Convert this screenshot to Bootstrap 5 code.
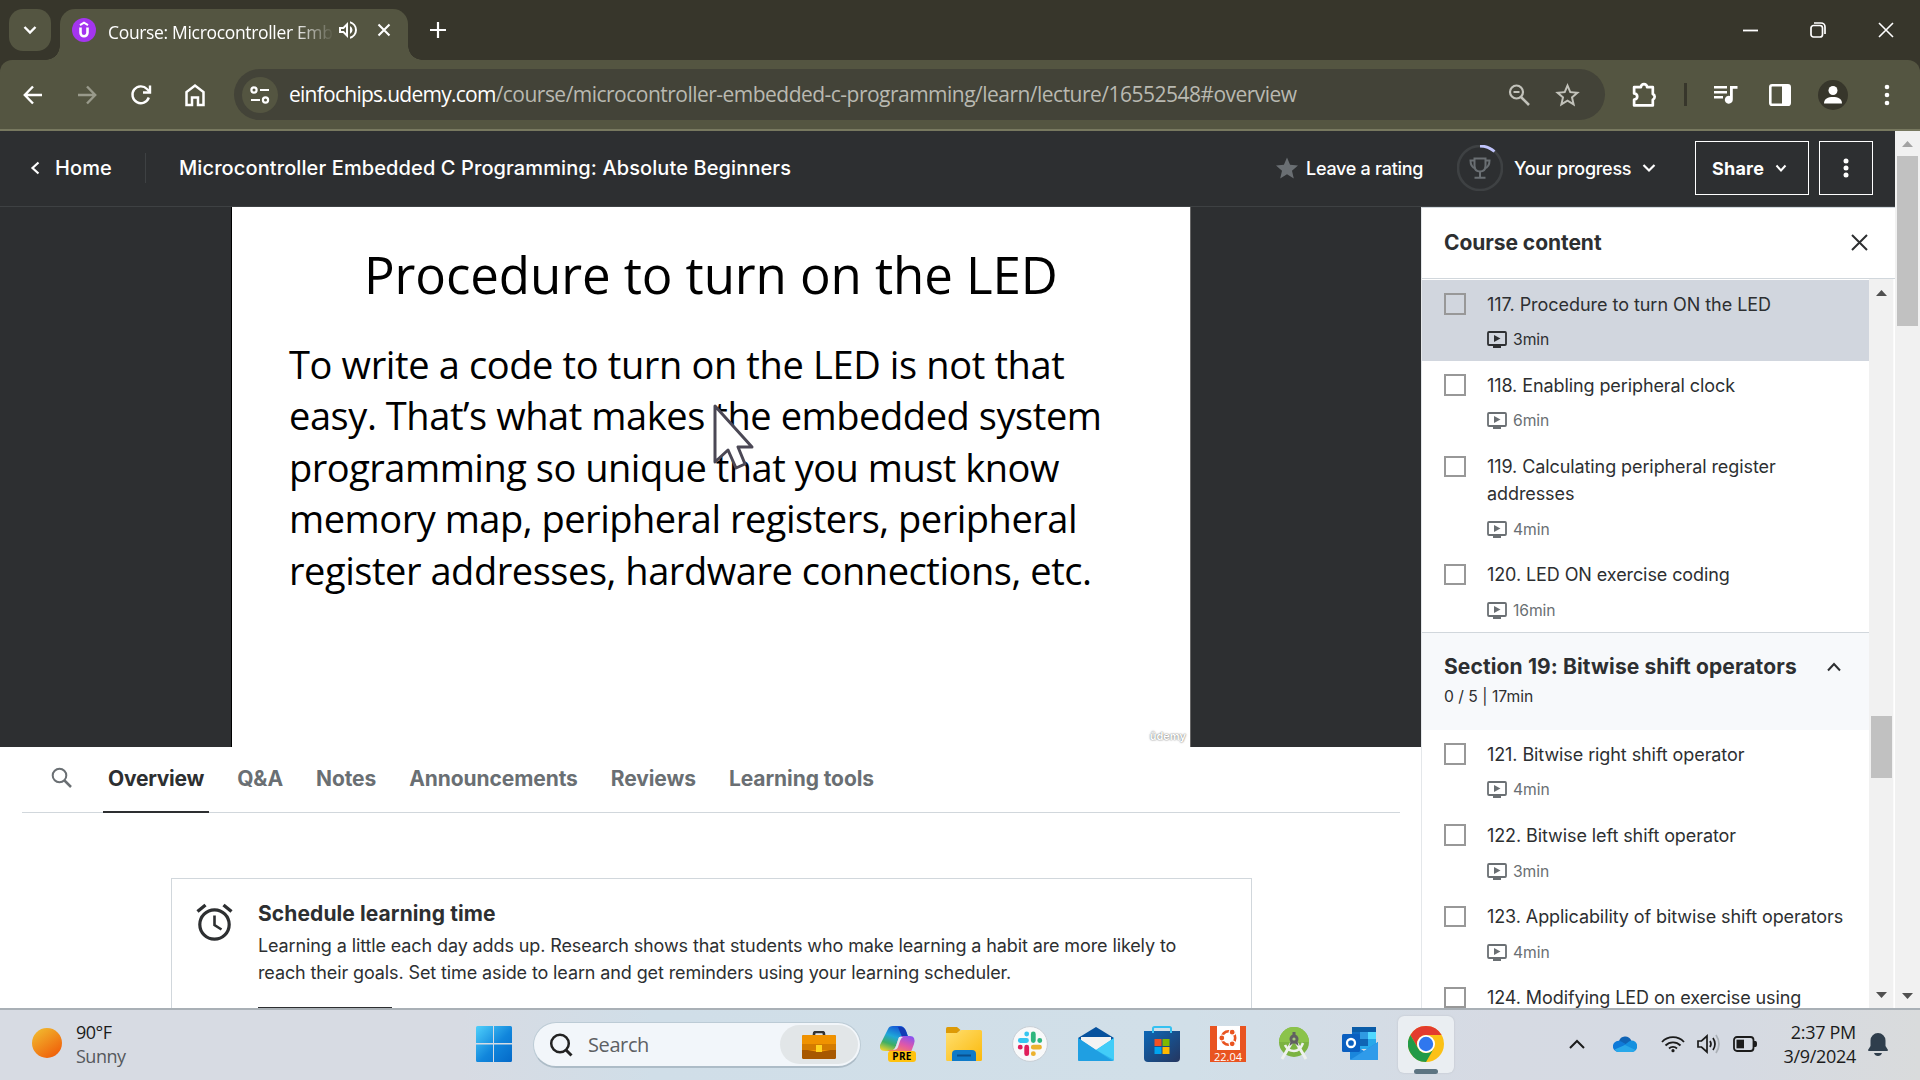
<!DOCTYPE html>
<html lang="en">
<head>
<meta charset="utf-8">
<title>Course: Microcontroller Embedded C Programming</title>
<link href="https://cdn.jsdelivr.net/npm/bootstrap@5.3.0/dist/css/bootstrap.min.css" rel="stylesheet">
<script src="https://cdn.jsdelivr.net/npm/bootstrap@5.3.0/dist/js/bootstrap.bundle.min.js"></script>
<style>
body{width:1920px;height:1080px;overflow:hidden;font-family:Inter,"Liberation Sans",sans-serif;color:#2d2f31;background:#fff;font-size:18px}
svg{display:block;flex:none}
.sys{font-family:"Open Sans","Noto Sans",sans-serif}
.slot{display:flex;align-items:center;justify-content:center;flex:none}
.w32{width:32px}.w54{width:54px}.w68{width:68px}.w78{width:78px}
/* browser chrome */
.tabstrip{height:60px;background:#37362b;padding:9px 0 0 9px;color:#fff}
.tabsearch{width:42px;height:42px;border-radius:14px;background:#545541;margin-right:9px}
.browser-tab{width:348px;height:51px;border-radius:15px 15px 0 0;background:#545541;position:relative;padding:0 12px 9px}
.browser-tab:before,.browser-tab:after{content:"";position:absolute;bottom:0;width:14px;height:14px}
.browser-tab:before{left:-14px;background:radial-gradient(circle at 0 0,transparent 13.5px,#545541 14px)}
.browser-tab:after{right:-14px;background:radial-gradient(circle at 100% 0,transparent 13.5px,#545541 14px)}
.tab-title{width:228px;margin-left:12px;font-size:17.5px;letter-spacing:-.33px;white-space:nowrap;-webkit-mask-image:linear-gradient(90deg,#000 185px,transparent 226px);mask-image:linear-gradient(90deg,#000 185px,transparent 226px);padding-top:4px}
.newtab{width:60px;height:42px}
.corner{background:#37362b}
.toolbar{height:71px;background:#545541;border-bottom:2px solid #77785f;border-radius:12px 12px 0 0;color:#fff}
.addr{width:1371px;height:51px;border-radius:26px;background:#434338;margin-left:12px;padding-left:8px}
.addr-icons{width:92px;gap:25px;margin-left:25px}
.siteinfo{width:36px;height:36px;border-radius:50%;background:#545541}
.url{font-size:21px;letter-spacing:-.52px;color:#b9b9b1;margin-left:11px;width:1184px;white-space:nowrap}
.url b{font-weight:400;color:#fff;letter-spacing:-.74px}
.tsep{width:3px;height:23px;background:#37362b}
.profile{width:30px;height:30px;border-radius:50%;background:#37362b}
/* course header */
.course-head{width:1895px;height:76px;background:#2d2f31;border-bottom:1px solid #3e4143;color:#fff;padding-bottom:1px}
.course-name{font-size:20px;font-weight:500;letter-spacing:.105px;white-space:nowrap;width:1097px}
.home-link{width:90px;margin-left:15px}
.hsep{width:1px;height:30px;background:#3e4143;margin-right:33px}
.hd{font-size:18px;white-space:nowrap;font-weight:500;letter-spacing:-.27px}
.obtn{border:1px solid #fff;height:54px}
/* page scrollbar */
.page-scroll{width:25px;height:877px;background:#f1f1f1;padding:9px 2px 0}
.page-thumb{height:170px;background:#c1c1c1;margin-top:9px}
.page-row{height:877px}
/* video */
.main-col{width:1421px;height:801px;overflow:hidden}
.video{height:540px;background:#2d2f31}
.slide{width:960px;height:540px;margin-left:231px;background:#fff;position:relative;color:#000;font-family:"Open Sans",sans-serif;border-left:1px solid #000;border-right:1px solid #666;padding-top:37px}
.slide-title{font-size:51px;line-height:60px;letter-spacing:-.08px;padding-left:132px;white-space:nowrap}
.slide-body{font-size:38px;line-height:51.4px;margin-top:35px;padding-left:57px;white-space:nowrap}
.slide-body div:nth-child(1){letter-spacing:-.37px}
.slide-body div:nth-child(2){letter-spacing:-.43px}
.slide-body div:nth-child(3){letter-spacing:-.49px}
.slide-body div:nth-child(4){letter-spacing:-.48px}
.slide-body div:nth-child(5){letter-spacing:-.45px}
.pointer{position:absolute;left:480px;top:195px}
.wmark{position:absolute;right:4px;bottom:1px;font:600 11px Inter,sans-serif;color:#fff;text-shadow:0 0 2px #777,0 0 1px #999;line-height:20px}
/* lower tabs */
.ctabs{margin:0 21px 0 22px;height:66px;border-bottom:1.5px solid #d1d7dc;padding-left:25px}
.ctab-search{width:56px;padding:0 0 3px 4px}
.ctab{font-size:21px;font-weight:700;color:#6a6f73;padding:0 5px;height:66px;line-height:64px;letter-spacing:-.09px;white-space:nowrap}
.ctab.on{color:#2d2f31;border-bottom:2.5px solid #2d2f31;letter-spacing:-.25px}
.sched{width:1081px;height:200px;border:1px solid #d1d7dc;margin:65px 0 0 171px;padding:21px 0 0 24px}
.sched h2{font-size:21px;font-weight:700;line-height:28px;margin:0 0 4px;letter-spacing:.09px}
.sched-text{font-size:18px;line-height:27px;letter-spacing:-.115px;white-space:nowrap}
.sched-btn{width:134px;height:40px;border:1px solid #2d2f31;margin-top:21px}
/* sidebar */
.side{width:474px;height:801px;border-left:1px solid #e4e7ea;border-top:1px solid #d1d7dc;background:#fff;overflow:hidden}
.side-head{height:71px;border-bottom:1px solid #d1d7dc;padding:0 27px 1px 22px;font-size:21px;font-weight:700;letter-spacing:-.06px}
.lessons{width:447px;height:729px;overflow:hidden;padding-top:1px}
.lesson{padding:10.5px 0 9.400px 22px;letter-spacing:-.09px;line-height:27px;white-space:nowrap}
.lesson.now{background:#d1d6de;letter-spacing:-.04px}
.box22{width:21.5px;height:21.5px;border:2px solid #989898;margin:2.5px 21.5px 0 0;flex:none}
.meta{height:24.400px;margin-top:10px;font-size:15.7px;color:#6a6f73;gap:6px}
.now .meta{color:#2d2f31}
.sect{height:98px;border-top:1px solid #d1d7dc;padding:19px 25px 0 22px;background:#f7f9fb}
.sect h3{font-size:21px;font-weight:700;line-height:30px;margin:0;letter-spacing:.12px;white-space:nowrap}
.sect-sub{font-size:15.700px;line-height:30px}
.side-scroll{width:25px;background:#f1f1f1;border-right:1px solid #fafafa;height:729px;padding-top:10px}
.side-thumb{width:21px;height:62px;background:#c1c1c1;margin:420px 0 0 2px}
/* taskbar */
.taskbar{height:72px;border-top:2px solid #a9b0b6;background:linear-gradient(90deg,#d7dbe3 0,#d7dbe3 24%,#d0dee8 34%,#d1dfe8 62%,#d6dae3 78%,#d5dae3 90%,#d9dbdc 100%);color:#1b1b1b;font-size:18px}
.weather{width:400px;margin-top:-3px;letter-spacing:-.5px}
.tb-search{width:328px;height:46px;border-radius:23px;background:#f2f6fa;border:1px solid #bccbd5;border-bottom:2px solid #adbcc7;margin-left:21px;padding:0 2px 0 15px}
.tb-hint{font-size:20px;letter-spacing:-.4px;color:#5d6063;margin-left:15px}
.brief{width:78px;height:39px;border-radius:20px;background:#e2e6e8}
.apps{margin:-2px 0 0 4px}
.app{width:66px;height:70px}
.app-on{width:56px;height:57px;border-radius:6px;background:#eaeef2;box-shadow:0 0 2px #b9bec6;position:relative}
.app-on i{position:absolute;left:16px;bottom:-1px;width:24px;height:5px;border-radius:3px;background:#5d7482}
.lh24{line-height:24px}
.clock{width:74px;letter-spacing:-.3px;white-space:nowrap}
</style>
</head>
<body>
<svg width="0" height="0" class="position-absolute">
 <defs>
  <symbol id="vid" viewBox="0 0 20 17"><rect x="1" y="1" width="18" height="13" rx="1" fill="none" stroke="currentColor" stroke-width="1.8"/><path d="M7 4v7l6.500-3.500z" fill="currentColor"/><path d="M6 14.500h8V17H6z" fill="currentColor"/></symbol>
 </defs>
</svg>

<!-- tab strip -->
<div class="tabstrip d-flex sys">
  <div class="tabsearch slot"><svg width="14" height="10" viewBox="0 0 14 10" fill="none" stroke="#fff" stroke-width="2.400"><path d="M1.500 2 7 7.500 12.500 2"/></svg></div>
  <div class="browser-tab d-flex align-items-center">
    <svg width="24" height="24" viewBox="0 0 24 24"><circle cx="12" cy="12" r="12" fill="#a435f0"/><path d="M8 7.200 12 4.600 16 7.200" fill="none" stroke="#fff" stroke-width="2"/><path d="M8.500 9.500v5.300a3.500 3.500 0 0 0 7 0V9.500" fill="none" stroke="#fff" stroke-width="2.600"/></svg>
    <div class="tab-title">Course: Microcontroller Emb</div>
    <svg width="24" height="24" viewBox="0 0 24 24" fill="#fff"><path d="M3 9v6h4l5 5V4L7 9H3zm7-.17v6.340L7.830 13H5v-2h2.830L10 8.830zM16.500 12A4.500 4.500 0 0 0 14 7.970v8.050A4.470 4.470 0 0 0 16.500 12zM14 3.230v2.060a7 7 0 0 1 0 13.420v2.060a9 9 0 0 0 0-17.540z"/></svg>
    <svg class="ms-auto me-1" width="16" height="16" viewBox="0 0 16 16" stroke="#fff" stroke-width="2.100"><path d="M2.500 2.500l11 11M13.500 2.500l-11 11"/></svg>
  </div>
  <div class="slot newtab"><svg width="16" height="16" viewBox="0 0 16 16" stroke="#fff" stroke-width="2.200"><path d="M8 0v16M0 8h16"/></svg></div>
  <div class="d-flex ms-auto newtab w-auto">
    <div class="slot w68"><svg width="15" height="15" viewBox="0 0 15 15" stroke="#fff" stroke-width="1.800"><path d="M0 7.500h15"/></svg></div>
    <div class="slot w68"><svg width="16" height="16" viewBox="0 0 16 16" fill="none" stroke="#fff" stroke-width="1.700"><rect x="1" y="3.500" width="11.500" height="11.500" rx="2.500"/><path d="M4 1h7a4 4 0 0 1 4 4v7"/></svg></div>
    <div class="slot w68"><svg width="16" height="16" viewBox="0 0 16 16" stroke="#fff" stroke-width="1.600"><path d="M1 1l14 14M15 1L1 15"/></svg></div>
  </div>
</div>

<!-- toolbar -->
<div class="corner">
<div class="toolbar d-flex align-items-center sys">
  <div class="d-flex" style="margin-left:6px">
    <div class="slot w54"><svg width="20" height="20" viewBox="0 0 20 20" fill="none" stroke="#fff" stroke-width="2.400"><path d="M19 10H2.500M10 1.500 1.800 10l8.200 8.500"/></svg></div>
    <div class="slot w54"><svg width="20" height="20" viewBox="0 0 20 20" fill="none" stroke="#999a8b" stroke-width="2.400"><path d="M1 10h16.500M10 1.500l8.200 8.500-8.200 8.500"/></svg></div>
    <div class="slot w54"><svg width="22" height="22" viewBox="0 0 22 22" fill="none" stroke="#fff" stroke-width="2.400"><path d="M18.800 13.500A8.400 8.400 0 1 1 17 5l2.500 2.500"/><path d="M20 1.500v7h-7"/></svg></div>
    <div class="slot w54"><svg width="22" height="24" viewBox="0 0 22 24" fill="none" stroke="#fff" stroke-width="2.500"><path d="M2.500 22V9L11 2.500 19.500 9v13H14v-7.500H8V22z"/></svg></div>
  </div>
  <div class="addr d-flex align-items-center">
    <div class="siteinfo slot"><svg width="20" height="18" viewBox="0 0 20 18" fill="none" stroke="#fff" stroke-width="2.200"><circle cx="4" cy="4" r="2.600"/><path d="M10 4h9M1 14h9"/><circle cx="15.500" cy="14" r="2.600"/></svg></div>
    <div class="url"><b>einfochips.udemy.com</b>/course/microcontroller-embedded-c-programming/learn/lecture/16552548#overview</div>
    <div class="slot addr-icons">
      <svg width="22" height="22" viewBox="0 0 22 22" fill="none" stroke="#c2c2ba"><circle cx="8.500" cy="8" r="6.500" stroke-width="2.200"/><path d="M13 13l8 8" stroke-width="2.600"/><path d="M5.500 8h6" stroke-width="2"/></svg>
      <svg width="25" height="24" viewBox="2 2 20 19.500" fill="#c2c2ba"><path d="M22 9.240l-7.190-.62L12 2 9.190 8.630 2 9.240l5.460 4.730L5.820 21 12 17.270 18.180 21l-1.630-7.030L22 9.240zM12 15.400l-3.760 2.270 1-4.280-3.320-2.880 4.380-.38L12 6.100l1.710 4.040 4.380.38-3.320 2.880 1 4.280L12 15.400z"/></svg>
    </div>
  </div>
  <div class="slot" style="width:79px"><svg width="27" height="28" viewBox="0 1 26 26" fill="none" stroke="#fff" stroke-width="2.600" stroke-linejoin="round"><path d="M3 6.500h6.500a3 3 0 0 1 6 0H21v6.500a3 3 0 0 1 0 5.500V24H3v-5.500c4-.5 4-5.500 0-6z"/></svg></div>
  <div class="tsep"></div>
  <div class="slot w78"><svg width="24" height="20" viewBox="0 0 24 20" fill="#fff"><path d="M0 1h13v2.400H0zM0 6h13v2.400H0zM0 11h9v2.400H0zM16 1h7.500v2.800H18.800V14.500a4 4 0 1 1-2.800-3.600z"/></svg></div>
  <div class="slot" style="width:30px"><svg width="22" height="22" viewBox="0 0 22 22"><rect x="1.300" y="1.300" width="19.400" height="19.400" rx="1.800" fill="none" stroke="#fff" stroke-width="2.600"/><path d="M13 1h8v20h-8z" fill="#fff"/></svg></div>
  <div class="slot" style="width:76px"><div class="profile slot"><svg width="18" height="20" viewBox="0 0 18 20" fill="#fff"><circle cx="9" cy="5.500" r="4.500"/><path d="M0 18.500c0-5 4-6.500 9-6.500s9 1.500 9 6.500z"/></svg></div></div>
  <div class="slot w32"><svg width="6" height="22" viewBox="0 0 6 22" fill="#fff"><circle cx="3" cy="3" r="2.300"/><circle cx="3" cy="11" r="2.300"/><circle cx="3" cy="19" r="2.300"/></svg></div>
</div>
</div>

<div class="d-flex page-row">
<div>
  <!-- course header -->
  <header class="course-head d-flex align-items-center">
    <svg style="margin-left:30px" width="10" height="14" viewBox="0 0 10 14" fill="none" stroke="#fff" stroke-width="2.200"><path d="M8.500 1.500 2.500 7l6 5.500"/></svg>
    <div class="course-name home-link">Home</div>
    <div class="hsep"></div>
    <div class="course-name">Microcontroller Embedded C Programming: Absolute Beginners</div>
    <svg width="22" height="22" viewBox="2 2 20 19" fill="#6a6f73"><path d="M12 17.270 18.180 21l-1.640-7.030L22 9.240l-7.190-.61L12 2 9.190 8.630 2 9.240l5.460 4.730L5.820 21z"/></svg>
    <div class="hd" style="margin-left:8px;width:151px">Leave a rating</div>
    <svg width="46" height="46" viewBox="0 0 46 46" fill="none"><circle cx="23" cy="23" r="22" stroke="#3e4143" stroke-width="2.600"/><path d="M23 1a22 22 0 0 1 14.500 5.500" stroke="#c0c4fc" stroke-width="2.800"/><g stroke="#6a6f73" stroke-width="2"><path d="M17.500 13.500h11v7c0 4-2.500 6-5.500 6s-5.500-2-5.500-6z"/><path d="M17.500 15.500H13.500c0 5 1.500 7 5 8M28.500 15.500h4c0 5-1.500 7-5 8M23 26.500V32M17.500 32.800h11"/></g></svg>
    <div class="hd" style="margin-left:11px;width:128px">Your progress</div>
    <svg width="14" height="10" viewBox="0 0 14 10" fill="none" stroke="#fff" stroke-width="2.200"><path d="M1.500 2 7 7.500 12.500 2"/></svg>
    <div class="obtn d-flex align-items-center" style="width:114px;margin-left:39px;padding-left:16px"><b class="hd fw-bold" style="width:63px;letter-spacing:.2px">Share</b><svg width="12" height="9" viewBox="0 0 12 9" fill="none" stroke="#fff" stroke-width="2"><path d="M1.500 1.500 6 6.500l4.500-5"/></svg></div>
    <div class="obtn slot w54" style="margin-left:10px"><svg width="6" height="20" viewBox="0 0 6 20" fill="#fff"><circle cx="3" cy="3" r="2.500"/><circle cx="3" cy="10" r="2.500"/><circle cx="3" cy="17" r="2.500"/></svg></div>
  </header>
  <div class="d-flex">
    <main class="main-col">
      <div class="video">
        <div class="slide">
          <div class="slide-title">Procedure to turn on the LED</div>
          <div class="slide-body"><div>To write a code to turn on the LED is not that</div><div>easy. That’s what makes the embedded system</div><div>programming so unique that you must know</div><div>memory map, peripheral registers, peripheral</div><div>register addresses, hardware connections, etc.</div></div>
          <svg class="pointer" width="46" height="74" viewBox="0 0 46 74"><path d="M3 4v56l13-12 8 18 9-4-7-17h14z" fill="#fff" stroke="#4b4855" stroke-width="3" stroke-linejoin="round"/></svg>
          <div class="wmark">ûdemy</div>
        </div>
      </div>
      <nav class="ctabs d-flex">
        <div class="ctab-search d-flex align-items-center"><svg width="22" height="22" viewBox="0 0 22 22" fill="none" stroke="#6a6f73" stroke-width="2"><circle cx="8.500" cy="8.500" r="6.800"/><path d="M13.500 13.500l6.500 6.500" stroke-width="2.500"/></svg></div>
        <div class="d-flex" style="gap:23px"><div class="ctab on">Overview</div><div class="ctab">Q&amp;A</div><div class="ctab">Notes</div><div class="ctab">Announcements</div><div class="ctab">Reviews</div><div class="ctab">Learning tools</div></div>
      </nav>
      <section class="sched d-flex">
        <svg style="margin:3px 25px 0 0" width="37" height="38" viewBox="0 0 37 38" fill="none" stroke="#2d2f31"><circle cx="18.500" cy="21.500" r="14.700" stroke-width="3.200"/><path d="M18.500 12.500V22l7 4.500" stroke-width="2.600"/><path d="M1.500 8.500 9.500 2M35.500 8.500 27.500 2" stroke-width="3.400"/></svg>
        <div>
          <h2>Schedule learning time</h2>
          <div class="sched-text">Learning a little each day adds up. Research shows that students who make learning a habit are more likely to<br>reach their goals. Set time aside to learn and get reminders using your learning scheduler.</div>
          <div class="sched-btn"></div>
        </div>
      </section>
    </main>
    <aside class="side">
      <div class="side-head d-flex align-items-center justify-content-between">Course content<svg width="17" height="17" viewBox="0 0 17 17" stroke="#2d2f31" stroke-width="2"><path d="M1 1l15 15M16 1 1 16"/></svg></div>
      <div class="d-flex">
        <div class="lessons">
          <div class="lesson now d-flex"><div class="box22"></div><div>117. Procedure to turn ON the LED<div class="meta d-flex align-items-center"><svg width="20" height="17"><use href="#vid"/></svg>3min</div></div></div>
          <div class="lesson d-flex"><div class="box22"></div><div>118. Enabling peripheral clock<div class="meta d-flex align-items-center"><svg width="20" height="17"><use href="#vid"/></svg>6min</div></div></div>
          <div class="lesson d-flex"><div class="box22"></div><div>119. Calculating peripheral register<br>addresses<div class="meta d-flex align-items-center"><svg width="20" height="17"><use href="#vid"/></svg>4min</div></div></div>
          <div class="lesson d-flex"><div class="box22"></div><div>120. LED ON exercise coding<div class="meta d-flex align-items-center"><svg width="20" height="17"><use href="#vid"/></svg>16min</div></div></div>
          <div class="sect">
            <div class="d-flex align-items-center justify-content-between"><h3>Section 19: Bitwise shift operators</h3><svg style="margin-right:3px" width="14" height="10" viewBox="0 0 14 10" fill="none" stroke="#2d2f31" stroke-width="2"><path d="M1 8.500 7 2l6 6.500"/></svg></div>
            <div class="sect-sub">0 / 5 | 17min</div>
          </div>
          <div class="lesson d-flex"><div class="box22"></div><div>121. Bitwise right shift operator<div class="meta d-flex align-items-center"><svg width="20" height="17"><use href="#vid"/></svg>4min</div></div></div>
          <div class="lesson d-flex"><div class="box22"></div><div>122. Bitwise left shift operator<div class="meta d-flex align-items-center"><svg width="20" height="17"><use href="#vid"/></svg>3min</div></div></div>
          <div class="lesson d-flex"><div class="box22"></div><div>123. Applicability of bitwise shift operators<div class="meta d-flex align-items-center"><svg width="20" height="17"><use href="#vid"/></svg>4min</div></div></div>
          <div class="lesson d-flex"><div class="box22"></div><div>124. Modifying LED on exercise using</div></div>
        </div>
        <div class="side-scroll d-flex flex-column">
          <svg class="mx-auto" width="11" height="7"><path d="M0 7 5.500 1 11 7z" fill="#505050"/></svg>
          <div class="side-thumb"></div>
          <svg class="mx-auto mt-auto" style="margin-bottom:9px" width="11" height="7"><path d="M0 0h11L5.500 6z" fill="#505050"/></svg>
        </div>
      </div>
    </aside>
  </div>
</div>
<div class="page-scroll d-flex flex-column">
  <svg class="mx-auto" width="11" height="7"><path d="M0 7 5.500 1 11 7z" fill="#a3a3a3"/></svg>
  <div class="page-thumb"></div>
  <svg class="mx-auto mt-auto" style="margin-bottom:8px" width="11" height="7"><path d="M0 0h11L5.500 6z" fill="#505050"/></svg>
</div>
</div>

<!-- taskbar -->
<footer class="taskbar d-flex align-items-center sys">
  <svg style="margin:-4px 14px 0 32px" width="30" height="30" viewBox="0 0 30 30"><defs><linearGradient id="sun" x1="0" y1="0" x2=".7" y2="1"><stop stop-color="#f1c232"/><stop offset="1" stop-color="#f0600a"/></linearGradient></defs><circle cx="15" cy="15" r="15" fill="url(#sun)"/></svg>
  <div class="lh24 weather"><div>90°F</div><div style="color:#55585c">Sunny</div></div>
  <svg style="margin-top:-2px" width="36" height="36" viewBox="0 0 36 36"><defs><linearGradient id="win" x1="0" y1="0" x2="1" y2="1"><stop stop-color="#4fd0fb"/><stop offset=".55" stop-color="#1186dc"/><stop offset="1" stop-color="#0469c8"/></linearGradient></defs><path fill="url(#win)" d="M1.500 0H17v17H0V1.500A1.500 1.500 0 0 1 1.500 0zM18 0h16.500A1.500 1.500 0 0 1 36 1.500V17H18zM0 18.500h17V36H1.500A1.500 1.500 0 0 1 0 34.500zM18 18.500h18v16a1.500 1.500 0 0 1-1.500 1.500H18z"/></svg>
  <div class="tb-search d-flex align-items-center">
    <svg width="24" height="24" viewBox="0 0 24 24" fill="none" stroke="#222" stroke-width="2.500"><circle cx="11" cy="10.500" r="8.800"/><path d="M17 17l5.500 5.500" stroke-width="3"/></svg>
    <div class="tb-hint">Search</div>
    <div class="brief slot ms-auto"><svg width="34" height="28" viewBox="0 0 34 28"><path d="M12 5V3a2 2 0 0 1 2-2h6a2 2 0 0 1 2 2v2" fill="none" stroke="#333" stroke-width="2.600"/><rect y="4" width="34" height="24" rx="1.500" fill="#a75800"/><path d="M0 5.500A1.500 1.500 0 0 1 1.500 4h31A1.500 1.500 0 0 1 34 5.500V18l-17 3-17-3z" fill="#f09200"/><path d="M0 13h34v6H0z" fill="#d47b00"/><rect x="14" y="14" width="6" height="7" fill="#ffd21e"/></svg></div>
  </div>
  <div class="d-flex apps">
    <div class="app slot"><svg width="36" height="36" viewBox="0 0 36 36"><defs><linearGradient id="cp1" x1=".6" y1="0" x2=".2" y2="1"><stop stop-color="#1557d6"/><stop offset=".4" stop-color="#1fa7d8"/><stop offset=".7" stop-color="#3fae63"/><stop offset="1" stop-color="#e8d22e"/></linearGradient><linearGradient id="cp2" x1=".8" y1="0" x2=".2" y2="1"><stop stop-color="#8a52f0"/><stop offset=".5" stop-color="#e058a8"/><stop offset="1" stop-color="#fb8a50"/></linearGradient></defs><path d="M8 3Q9 0 13 0h7q4 0 6 5l2 5h-5q-4 0-5 4l-2 6q-2 5-6 5H5q-6 0-5-6z" fill="url(#cp1)"/><path d="M18 1h3q3 0 5 4l2 6h-6z" fill="#123bb6"/><path d="M23 10h7q6 0 4 8l-3 8H13q-4 0-5-2h4q3 0 4-4l3-8q1-2 4-2z" fill="url(#cp2)"/><path d="M19 11h4q-2 1-3 4l-2 6q-1 3-5 3 2-1 3-4z" fill="#dfe6f0"/><rect x="8" y="25" width="28" height="11" rx="3" fill="#ffc20e"/><text x="22" y="34" text-anchor="middle" font-size="10" font-weight="700" letter-spacing=".3" font-family="Open Sans">PRE</text></svg></div>
    <div class="app slot"><svg width="36" height="34" viewBox="0 0 36 34"><defs><linearGradient id="fo" x1="0" y1="0" x2="1" y2="1"><stop stop-color="#ffdf70"/><stop offset="1" stop-color="#fbb90b"/></linearGradient></defs><path d="M0 6h11l4-3h19.500Q36 3 36 4.500V32.500q0 1.500-1.500 1.500h-33Q0 34 0 32.500z" fill="url(#fo)"/><path d="M0 1.500Q0 0 1.500 0H11l3.500 3-3.500 3H0z" fill="#dd9a06"/><path d="M6 34v-7q0-4 4-4h16q4 0 4 4v7z" fill="#0f7ac8"/><path d="M11 28.500h14" stroke="#0a4f8c" stroke-width="2"/></svg></div>
    <div class="app slot"><svg width="36" height="36" viewBox="0 0 36 36"><circle cx="18" cy="18" r="17.400" fill="#f8f9fa" stroke="#c7ced5"/><g stroke-width="4.800" stroke-linecap="round"><path d="M8.300 14.500h6.200M14.700 8v.1" stroke="#36c5f0"/><path d="M21.300 8v6.500M27.800 14.500h-.1" stroke="#2eb67d"/><path d="M21.300 21.200h6.200M21.300 27.700h.1" stroke="#ecb22e"/><path d="M14.700 21.200v6.500M8.300 21.200h-.1" stroke="#e01e5a"/></g></svg></div>
    <div class="app slot"><svg width="36" height="34" viewBox="0 0 36 34"><path d="M0 11 18 0l18 11v7H0z" fill="#07529e"/><path d="M3 10h30v14H3z" fill="#f3f3f3"/><path d="M0 11l18 12L36 11v21.500Q36 34 34.500 34h-33Q0 34 0 32.500z" fill="#2cb5ee"/><path d="M18 23l18 10V11z" fill="#42cdf8"/><path d="M0 11v21.500Q0 34 1.500 34h33L18 23z" fill="#1f9fe2"/></svg></div>
    <div class="app slot"><svg width="36" height="36" viewBox="0 0 36 36"><defs><linearGradient id="st" x1="0" y1="0" x2="1" y2="1"><stop stop-color="#0c67b6"/><stop offset="1" stop-color="#25365f"/></linearGradient></defs><path d="M0 5h36v27q0 4-4 4H4q-4 0-4-4z" fill="url(#st)"/><path d="M9 7V2.500Q9 1 10.500 1h15Q27 1 27 2.500V7" fill="none" stroke="#35c1f1" stroke-width="2"/><path d="M10.500 13h7v7h-7z" fill="#f25022"/><path d="M18.500 13h7v7h-7z" fill="#7fba00"/><path d="M10.500 21h7v7h-7z" fill="#00a4ef"/><path d="M18.500 21h7v7h-7z" fill="#ffb900"/></svg></div>
    <div class="app slot"><svg width="36" height="36" viewBox="0 0 36 36"><path d="M0 0h36v36H0z" fill="#e95420"/><path d="M7 0h23v24H7z" fill="#fff"/><circle cx="18.500" cy="12" r="6.700" fill="none" stroke="#e95420" stroke-width="2.600"/><g fill="#e95420" stroke="#fff" stroke-width="1.200"><circle cx="11.800" cy="12" r="3"/><circle cx="22.200" cy="6.200" r="3"/><circle cx="22.200" cy="17.800" r="3"/></g><text x="18" y="35" text-anchor="middle" font-size="11" fill="#fff" font-family="Open Sans">22.04</text></svg></div>
    <div class="app slot"><svg width="32" height="36" viewBox="0 0 32 36"><circle cx="16" cy="16" r="15" fill="#7cb342"/><path d="M1 16a15 15 0 0 1 30 0z" fill="#8bc34a"/><path d="M14 16 4 33M18 16l10 17" stroke="#eef1ee" stroke-width="3"/><path d="M7 19q3 6 9 6t9-8" fill="none" stroke="#eef1ee" stroke-width="2.600"/><circle cx="16" cy="13" r="4.500" fill="#616161"/><path d="M14.500 6h3v4h-3zM12.500 15l-1 5 4-3zM19.500 15l1 5-4-3z" fill="#616161"/><circle cx="16" cy="13" r="1.600" fill="#a5c97c"/></svg></div>
    <div class="app slot"><svg width="36" height="34" viewBox="0 0 36 34"><path d="M10 0h24v22H10z" fill="#28a8ea"/><path d="M10 0h24v5H10z" fill="#0a5ca8"/><path d="M18 5h8v7h-8z" fill="#2f9ae2"/><path d="M26 5h8v7h-8z" fill="#50d9ff"/><path d="M18 12h8v7h-8z" fill="#0f64b4"/><path d="M10 5h8v14h-8z" fill="#0f6cc4"/><path d="M8 15l14 9 14-9v17q0 1-1 1H9q-1 0-1-1z" fill="#1a86dc"/><path d="M36 15 8 33h27q1 0 1-1z" fill="#2f9bea"/><rect y="7" width="18" height="18" rx="1.500" fill="#0a5fc0"/><circle cx="9" cy="16" r="4" fill="none" stroke="#fff" stroke-width="2.300"/></svg></div>
    <div class="app slot"><div class="app-on slot"><svg width="36" height="36" viewBox="0 0 36 36"><circle cx="18" cy="18" r="18" fill="#fbc116"/><path d="M2.410 9A18 18 0 0 1 33.590 9H18a9 9 0 0 0-7.800 13.500z" fill="#e33b2e"/><path d="M2.410 9A18 18 0 0 0 18 36l7.800-13.500a9 9 0 0 1-15.600 0z" fill="#229a48"/><circle cx="18" cy="18" r="9" fill="#fff"/><circle cx="18" cy="18" r="7.200" fill="#2f77ee"/></svg><i></i></div></div>
  </div>
  <div class="d-flex align-items-center ms-auto" style="margin-top:-2px">
    <svg style="margin-right:28px" width="16" height="10" viewBox="0 0 16 10" fill="none" stroke="#1b1b1b" stroke-width="2"><path d="M1 9l7-7 7 7"/></svg>
    <svg style="margin-right:24px" width="24" height="16" viewBox="0 0 24 16"><path d="M6 5a6.500 6.500 0 0 1 12-1l1 5H5z" fill="#0f63b5"/><path d="M5.500 4.800a6 6 0 0 1 4 1.500L18 11l-5 5H5.500a5.600 5.600 0 0 1 0-11.200z" fill="#0f7ad8"/><path d="M18 4.500a5.700 5.700 0 0 1 1 11.500H12l-3-5 5-4q2-2 4-2.500z" fill="#1490df"/><path d="M1.500 13.500 12 9l10.500 5q-1.500 2-4 2H5.500q-2.500 0-4-2.500z" fill="#28a8ea"/></svg>
    <svg style="margin-right:12px" width="24" height="18" viewBox="0 0 24 18" fill="none" stroke="#1b1b1b" stroke-width="1.800"><path d="M1 7a15 15 0 0 1 22 0M4.500 10.500a10.500 10.500 0 0 1 15 0M8 13.500a5.800 5.800 0 0 1 8 0"/><circle cx="12" cy="15.700" r="1.600" fill="#1b1b1b" stroke="none"/></svg>
    <svg style="margin-right:12px" width="24" height="20" viewBox="0 0 24 20" fill="none" stroke="#1b1b1b" stroke-width="1.700"><path d="M1 7h3.500L10 2v16l-5.500-5H1z"/><path d="M13 7q2 3 0 6M16 4q4 6 0 12"/><path d="M19 1q6 9 0 18" stroke="#aab0b6"/></svg>
    <svg style="margin-right:25px" width="24" height="16" viewBox="0 0 24 16"><rect x="1" y="1" width="19.500" height="14" rx="3" fill="none" stroke="#1b1b1b" stroke-width="1.800"/><rect x="3.500" y="3.700" width="7.500" height="8.600" fill="#1b1b1b"/><path d="M21 5h1.500q1.500 0 1.500 3t-1.500 3H21z" fill="#1b1b1b"/></svg>
    <div class="lh24 text-end clock"><div>2:37 PM</div><div>3/9/2024</div></div>
    <svg style="margin:0 32px 0 12px" width="20" height="23" viewBox="0 0 20 23" fill="#2f3e4c"><path d="M10 0a7.500 7.500 0 0 1 7.500 7.500V13l2.500 4q0 1-1 1H1q-1 0-1-1l2.500-4V7.500A7.500 7.500 0 0 1 10 0zM6 20h8q-1 3-4 3t-4-3z"/></svg>
  </div>
</footer>
</body>
</html>
